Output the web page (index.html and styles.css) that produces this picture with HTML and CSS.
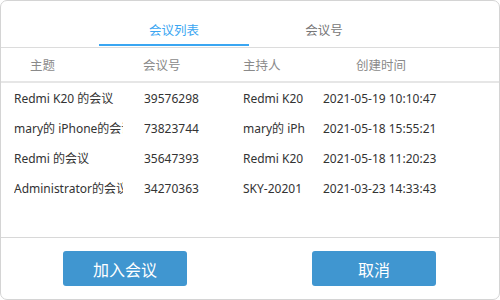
FILE: index.html
```html
<!DOCTYPE html>
<html lang="zh">
<head>
<meta charset="utf-8">
<link rel="stylesheet" href="styles.css">
</head>
<body>
<div class="window">
  <div class="tabs">
    <div class="tab active">会议列表</div>
    <div class="tab">会议号</div>
  </div>
  <div class="head">
    <div>主题</div>
    <div>会议号</div>
    <div>主持人</div>
    <div>创建时间</div>
  </div>
  <div class="list">
    <div class="row">
      <div class="c1">Redmi K20 的会议</div>
      <div class="c2">39576298</div>
      <div class="c3">Redmi K20</div>
      <div class="c4">2021-05-19 10:10:47</div>
    </div>
    <div class="row">
      <div class="c1">mary的 iPhone的会议</div>
      <div class="c2">73823744</div>
      <div class="c3">mary的 iPhone</div>
      <div class="c4">2021-05-18 15:55:21</div>
    </div>
    <div class="row">
      <div class="c1">Redmi 的会议</div>
      <div class="c2">35647393</div>
      <div class="c3">Redmi K20</div>
      <div class="c4">2021-05-18 11:20:23</div>
    </div>
    <div class="row">
      <div class="c1">Administrator的会议</div>
      <div class="c2">34270363</div>
      <div class="c3">SKY-20201</div>
      <div class="c4">2021-03-23 14:33:43</div>
    </div>
  </div>
  <div class="footer">
    <button class="btn">加入会议</button>
    <button class="btn">取消</button>
  </div>
</div>
</body>
</html>
```

FILE: styles.css
```css
* { box-sizing: border-box; }
html, body { margin: 0; padding: 0; background: #fff; }
body {
  font-family: "Noto Sans", "Noto Sans CJK SC", sans-serif;
  font-size: 12px;
  color: #333;
}
.window {
  width: 500px;
  height: 300px;
  border: 1px solid #d4d4d4;
  border-radius: 7px;
  display: flex;
  flex-direction: column;
  overflow: hidden;
  background: #fff;
}
.tabs {
  height: 47px;
  flex: none;
  display: flex;
  align-items: flex-start;
  padding-left: 98px;
  border-bottom: 1px solid #dcdcdc;
}
.tab {
  width: 150px;
  text-align: center;
  font-size: 12.5px;
  line-height: 18px;
  padding-top: 21px;
  padding-bottom: 4px;
  border-bottom: 2px solid transparent;
  color: #777;
}
.tab.active {
  color: #3aa6f2;
  border-bottom-color: #3aa6f2;
}
.head {
  flex: none;
  height: 35px;
  display: grid;
  grid-template-columns: 113px 100px 113px 1fr;
  align-items: center;
  padding-left: 29px;
  padding-bottom: 1px;
  color: #8a8a8a;
  font-size: 12.5px;
  border-bottom: 2px solid #e6e6e6;
}
.list {
  flex: 1;
  border-bottom: 1px solid #d8d8d8;
}
.row {
  height: 30px;
  display: grid;
  grid-template-columns: 130px 99px 80px 1fr;
  align-items: center;
  padding-left: 13px;
  white-space: nowrap;
}
.row > div { overflow: hidden; }
.c1 { width: 109px; }
.c3 { width: 62px; }
.footer {
  flex: none;
  height: 61px;
  display: grid;
  grid-template-columns: 248px 1fr;
  justify-items: center;
  padding-top: 13px;
  align-items: start;
}
.btn {
  width: 124px;
  height: 35px;
  border: none;
  border-radius: 3px;
  background: #4096d0;
  color: #fff;
  font-family: "Noto Sans CJK SC", sans-serif;
  font-size: 16px;
  padding: 0;
}
```
